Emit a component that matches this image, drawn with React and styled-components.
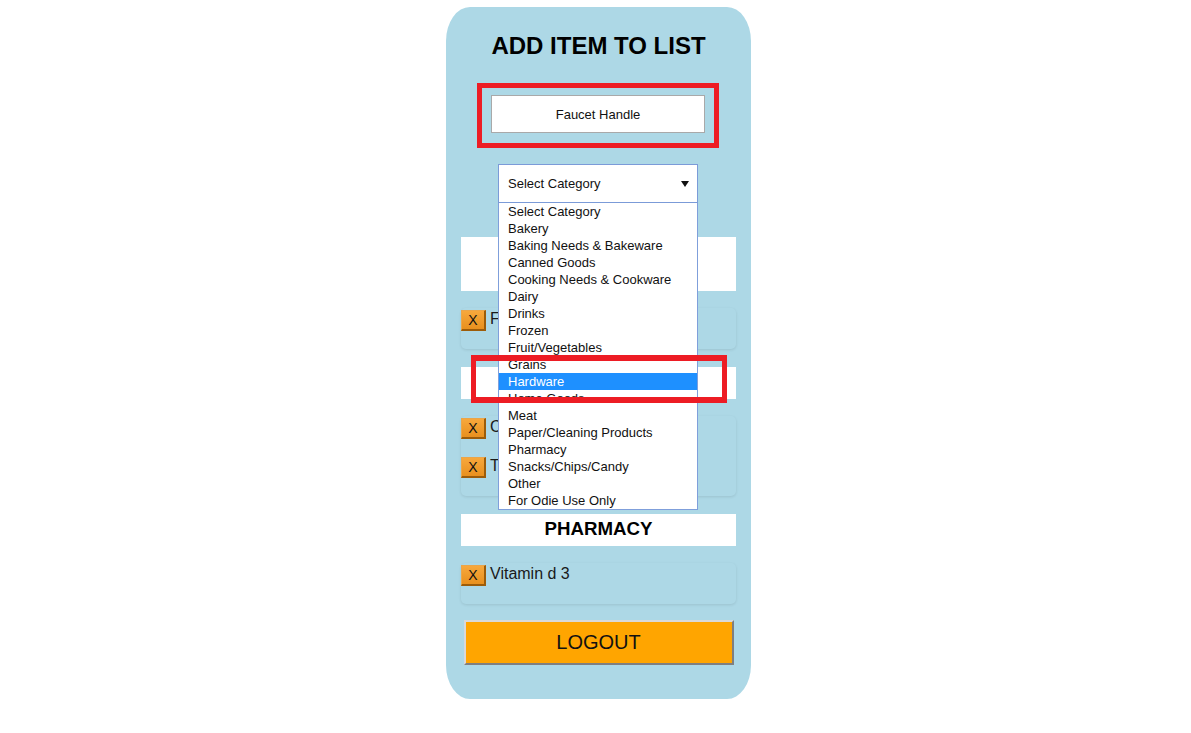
import React from "react";
import styled, { createGlobalStyle } from "styled-components";

const Global = createGlobalStyle`
  html, body { margin: 0; padding: 0; background: #ffffff; }
  body { font-family: "Liberation Sans", Arial, sans-serif; color: #000; }
`;

const Page = styled.div`
  display: flex;
  justify-content: center;
  padding: 7px 0 0 6px;
`;

const Panel = styled.div`
  width: 305px;
  box-sizing: border-box;
  background: #add8e6;
  border-radius: 24px / 34px;
  padding: 25px 15px 34px;
  display: flex;
  flex-direction: column;
  position: relative;
`;

const Title = styled.h1`
  margin: 0;
  font-size: 24px;
  line-height: 28px;
  font-weight: bold;
  text-align: center;
`;

const InputWrap = styled.div`
  position: relative;
  align-self: center;
  margin: 35px 1px 0 0;
`;

const TextInput = styled.div`
  width: 214px;
  height: 38px;
  box-sizing: border-box;
  background: #fff;
  border: 1px solid #a9a9a9;
  display: flex;
  align-items: center;
  justify-content: center;
  font-size: 13px;
  color: #111;
`;

const RedFrame = styled.div`
  position: absolute;
  left: ${(p) => p.$l}px;
  top: ${(p) => p.$t}px;
  width: ${(p) => p.$w}px;
  height: ${(p) => p.$h}px;
  box-sizing: border-box;
  border-style: solid;
  border-color: #ed1c24;
  border-width: ${(p) => p.$bv}px 5px;
  pointer-events: none;
  z-index: 5;
`;

const SelectWrap = styled.div`
  position: relative;
  align-self: center;
  margin: 31px 1px 0 0;
  z-index: 4;
`;

const SelectBox = styled.div`
  width: 200px;
  height: 39px;
  box-sizing: border-box;
  background: #fff;
  border: 1px solid #7b9bd8;
  padding: 0 8px 0 9px;
  display: flex;
  align-items: center;
  justify-content: space-between;
  font-size: 13px;
  color: #111;
`;

const List = styled.div`
  position: absolute;
  left: 0;
  top: 100%;
  width: 200px;
  box-sizing: border-box;
  background: #fff;
  border: 1px solid #7f9fdb;
  border-top: none;
`;

const Option = styled.div`
  height: 17px;
  line-height: 17px;
  font-size: 13px;
  padding-left: 9px;
  white-space: nowrap;
  color: ${(p) => (p.$active ? "#fff" : "#111")};
  background: ${(p) => (p.$active ? "#1e90ff" : "transparent")};
`;

const Header = styled.div`
  background: #fff;
  text-align: center;
  font-weight: bold;
  font-size: 18.7px;
  line-height: 22px;
  padding: 4px 14px 6px;
  margin-top: ${(p) => p.$mt || 0}px;
  margin-bottom: 17px;
`;

const Card = styled.div`
  border-radius: 5px;
  box-shadow: 0 1px 3px rgba(0, 0, 0, 0.1);
  padding-top: 2px;
  margin-bottom: 18px;
`;

const Row = styled.div`
  height: 39px;
  display: flex;
  align-items: flex-start;
  gap: 4px;
`;

const XButton = styled.div`
  width: 25px;
  height: 21px;
  box-sizing: border-box;
  background: linear-gradient(#f7a83c, #e8901e);
  border-style: solid;
  border-color: #eaa54a #9c5c0a #9c5c0a #eaa54a;
  border-width: 1px 2px 2px 1px;
  display: flex;
  align-items: center;
  justify-content: center;
  font-size: 14px;
  color: #111;
`;

const ItemText = styled.span`
  font-size: 16px;
  line-height: 18px;
  color: #1a1a1a;
`;

const Logout = styled.div`
  align-self: center;
  margin-top: -2px;
  width: 270px;
  height: 45px;
  box-sizing: border-box;
  background: #ffa500;
  border-style: solid;
  border-width: 2px;
  border-color: #d9d9d9 #7f7f7f #7f7f7f #d9d9d9;
  display: flex;
  align-items: center;
  justify-content: center;
  font-size: 20px;
  color: #111;
`;

const Arrow = () => (
  <svg width="8" height="6" viewBox="0 0 8 6">
    <path d="M0 0 L8 0 L4 6 Z" fill="#111" />
  </svg>
);

const categories = [
  "Select Category",
  "Bakery",
  "Baking Needs & Bakeware",
  "Canned Goods",
  "Cooking Needs & Cookware",
  "Dairy",
  "Drinks",
  "Frozen",
  "Fruit/Vegetables",
  "Grains",
  "Hardware",
  "Home Goods",
  "Meat",
  "Paper/Cleaning Products",
  "Pharmacy",
  "Snacks/Chips/Candy",
  "Other",
  "For Odie Use Only",
];

const groups = [
  { name: "PAPER/CLEANING PRODUCTS", items: ["Foil"], mt: 34 },
  { name: "FRUIT", items: ["Cherries", "Tomatoes"] },
  { name: "PHARMACY", items: ["Vitamin d 3"] },
];

export default function App() {
  return (
    <>
      <Global />
      <Page>
        <Panel>
          <Title>ADD ITEM TO LIST</Title>
          <InputWrap>
            <TextInput>Faucet Handle</TextInput>
            <RedFrame $l={-14} $t={-12} $w={242} $h={65} $bv={5} />
          </InputWrap>
          <SelectWrap>
            <SelectBox>
              <span>Select Category</span>
              <Arrow />
            </SelectBox>
            <List>
              {categories.map((c) => (
                <Option key={c} $active={c === "Hardware"}>
                  {c}
                </Option>
              ))}
              <RedFrame $l={-28} $t={152} $w={256} $h={48} $bv={6} />
            </List>
          </SelectWrap>
          {groups.map((g) => (
            <React.Fragment key={g.name}>
              <Header $mt={g.mt}>{g.name}</Header>
              <Card>
                {g.items.map((it) => (
                  <Row key={it}>
                    <XButton>X</XButton>
                    <ItemText>{it}</ItemText>
                  </Row>
                ))}
              </Card>
            </React.Fragment>
          ))}
          <Logout>LOGOUT</Logout>
        </Panel>
      </Page>
    </>
  );
}
